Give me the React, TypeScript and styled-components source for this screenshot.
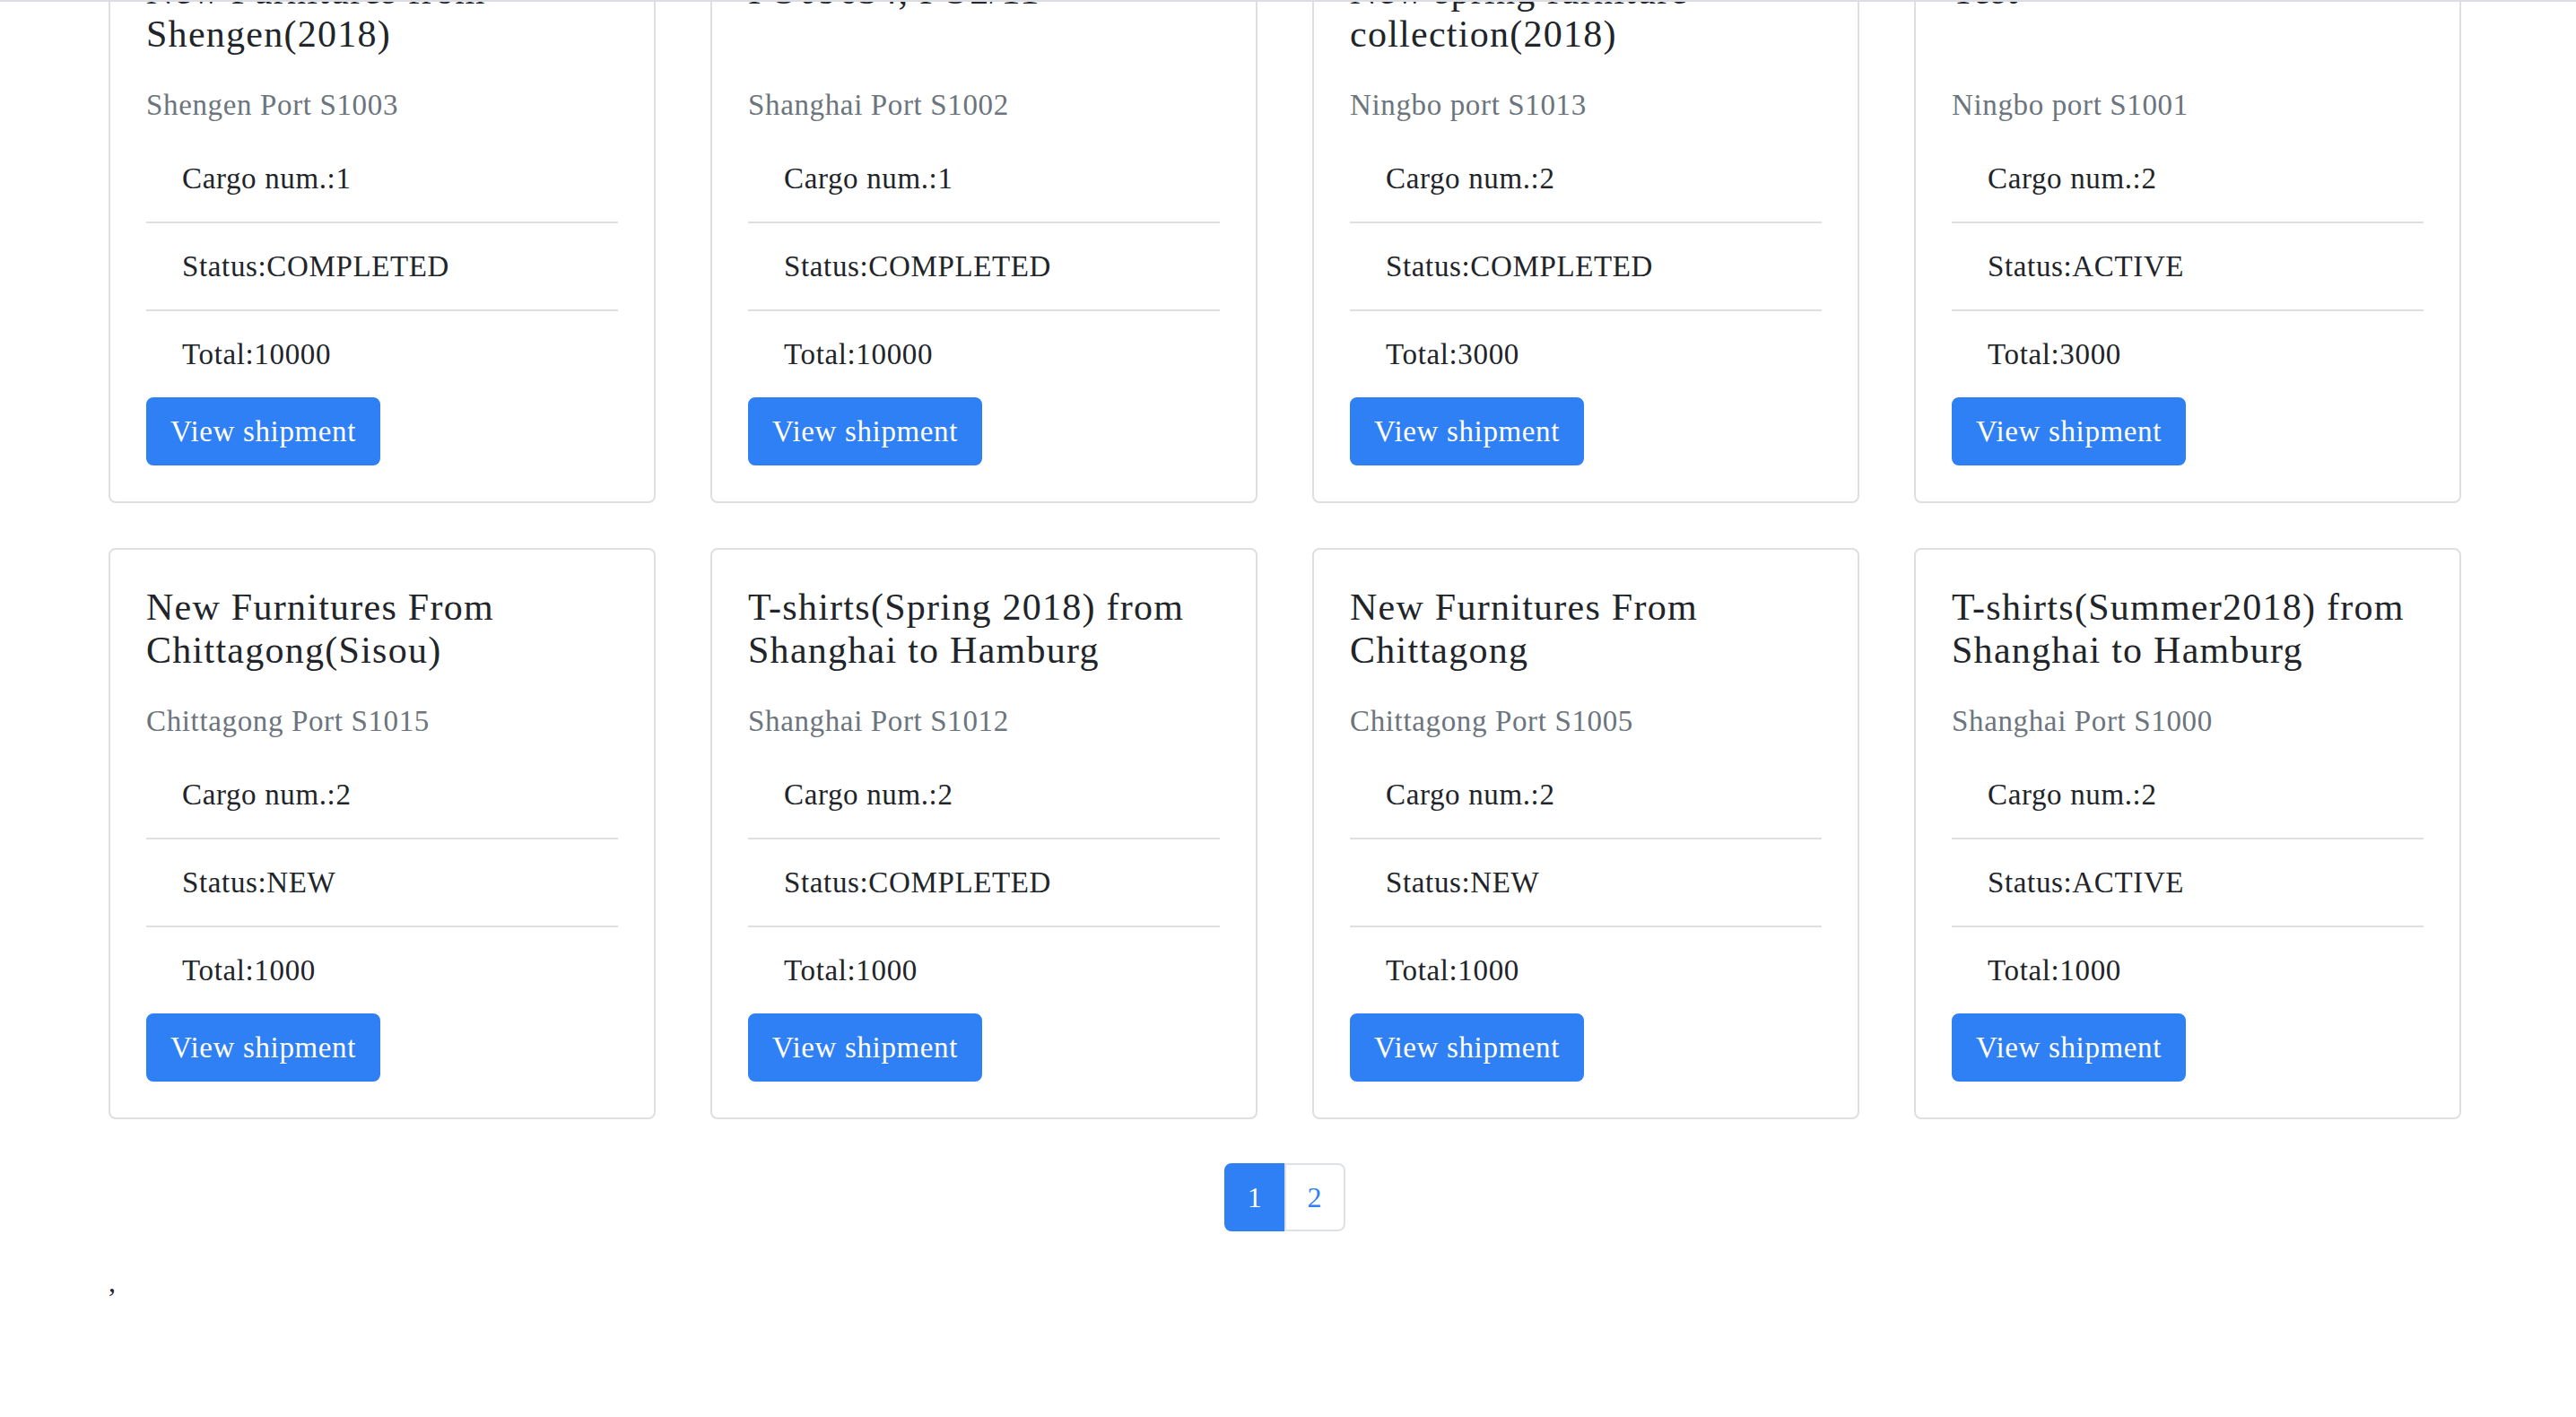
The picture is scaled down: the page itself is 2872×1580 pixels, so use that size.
import React from "react";
import styled, { createGlobalStyle } from "styled-components";

const GlobalStyle = createGlobalStyle`
  html, body {
    margin: 0;
    padding: 0;
    background: #ffffff;
    overflow: hidden;
  }
  body {
    font-family: "Liberation Serif", "Times New Roman", serif;
    color: #212529;
    letter-spacing: 0.04em;
  }
  * { box-sizing: border-box; }
`;

const TopRule = styled.div`
  height: 2px;
  background: #dcdde2;
`;

const Viewport = styled.main`
  height: calc(100vh - 2px);
  overflow: hidden;
`;

const Container = styled.div`
  width: 2623px;
  margin-left: 121px;
  margin-top: -78px;
`;

const CardGrid = styled.div`
  display: grid;
  grid-template-columns: repeat(4, 610px);
  column-gap: 61px;
  row-gap: 50px;
`;

const Card = styled.article`
  border: 2px solid #dfdfdf;
  border-radius: 8px;
  padding: 40px;
  background: #fff;
`;

const Title = styled.h5`
  margin: 0 0 36px;
  font-size: 42px;
  line-height: 48px;
  letter-spacing: 0.03em;
  min-height: 96px;
  font-weight: 400;
  color: #212529;
`;

const Subtitle = styled.h6`
  margin: 0 0 15px;
  font-size: 33px;
  line-height: 38px;
  font-weight: 400;
  color: #6c757d;
`;

const InfoList = styled.ul`
  list-style: none;
  margin: 0;
  padding: 0;
`;

const InfoItem = styled.li`
  padding: 24px 40px;
  font-size: 33px;
  line-height: 48px;
  color: #212529;
  border-bottom: 2px solid #dfdfdf;
  &:last-child {
    border-bottom: none;
  }
`;

const ViewButton = styled.button`
  display: inline-block;
  margin: 0;
  padding: 12px 25px;
  font-family: inherit;
  letter-spacing: inherit;
  font-size: 33px;
  line-height: 48px;
  color: #ffffff;
  background: #2f7ff5;
  border: 2px solid #2f7ff5;
  border-radius: 8px;
  cursor: pointer;
`;

const Pagination = styled.nav`
  display: flex;
  justify-content: center;
  margin: 49px 0 32px;
`;

const PageList = styled.ul`
  display: flex;
  list-style: none;
  margin: 0;
  padding: 0;
`;

const PageLink = styled.li<{ $active?: boolean }>`
  padding: 16px 24px;
  font-size: 32px;
  line-height: 40px;
  color: ${(p) => (p.$active ? "#ffffff" : "#2f7ff5")};
  background: ${(p) => (p.$active ? "#2f7ff5" : "#ffffff")};
  border: 2px solid ${(p) => (p.$active ? "#2f7ff5" : "#dee2e6")};
  &:first-child {
    border-radius: 8px 0 0 8px;
  }
  &:last-child {
    border-radius: 0 8px 8px 0;
  }
  & + & {
    margin-left: -2px;
  }
`;

const Trailer = styled.div`
  font-size: 32px;
  line-height: 48px;
  color: #212529;
`;

type Shipment = {
  title: string;
  port: string;
  cargo: number;
  status: string;
  total: number;
};

const shipments: Shipment[] = [
  { title: "New Furnitures from Shengen(2018)", port: "Shengen Port S1003", cargo: 1, status: "COMPLETED", total: 10000 },
  { title: "PO09634, PO2/11", port: "Shanghai Port S1002", cargo: 1, status: "COMPLETED", total: 10000 },
  { title: "New spring furniture collection(2018)", port: "Ningbo port S1013", cargo: 2, status: "COMPLETED", total: 3000 },
  { title: "Test", port: "Ningbo port S1001", cargo: 2, status: "ACTIVE", total: 3000 },
  { title: "New Furnitures From Chittagong(Sisou)", port: "Chittagong Port S1015", cargo: 2, status: "NEW", total: 1000 },
  { title: "T-shirts(Spring 2018) from Shanghai to Hamburg", port: "Shanghai Port S1012", cargo: 2, status: "COMPLETED", total: 1000 },
  { title: "New Furnitures From Chittagong", port: "Chittagong Port S1005", cargo: 2, status: "NEW", total: 1000 },
  { title: "T-shirts(Summer2018) from Shanghai to Hamburg", port: "Shanghai Port S1000", cargo: 2, status: "ACTIVE", total: 1000 },
];

export default function App() {
  return (
    <>
      <GlobalStyle />
      <TopRule />
      <Viewport>
        <Container>
          <CardGrid>
            {shipments.map((s, i) => (
              <Card key={i}>
                <Title>{s.title}</Title>
                <Subtitle>{s.port}</Subtitle>
                <InfoList>
                  <InfoItem>Cargo num.:{s.cargo}</InfoItem>
                  <InfoItem>Status:{s.status}</InfoItem>
                  <InfoItem>Total:{s.total}</InfoItem>
                </InfoList>
                <ViewButton>View shipment</ViewButton>
              </Card>
            ))}
          </CardGrid>
          <Pagination>
            <PageList>
              <PageLink $active>1</PageLink>
              <PageLink>2</PageLink>
            </PageList>
          </Pagination>
          <Trailer>,</Trailer>
        </Container>
      </Viewport>
    </>
  );
}
